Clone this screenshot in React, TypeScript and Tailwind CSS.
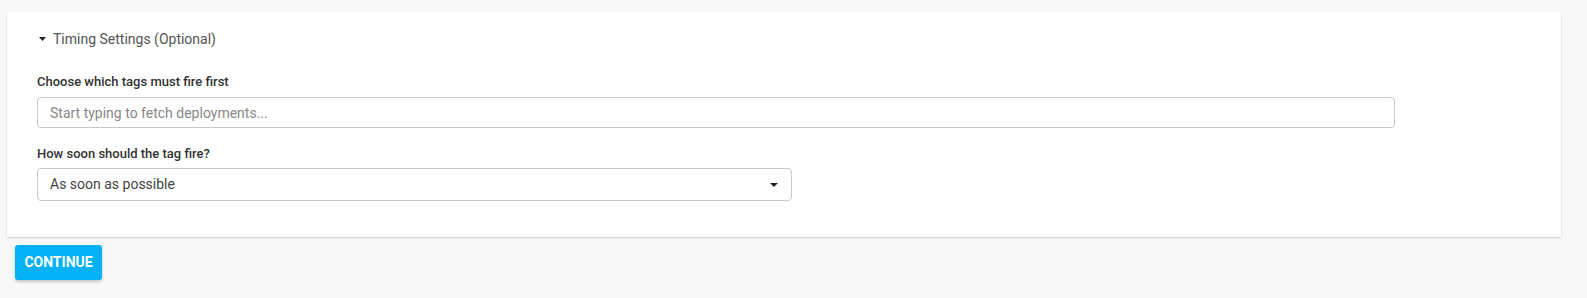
import { useState } from 'react';

export default function App() {
  const [open, setOpen] = useState(true);

  return (
    <div className="min-h-[298px] bg-[#f8f8f8] pt-3 pl-[7px] pr-[26px] font-['Roboto',sans-serif]">
      {/* Timing card */}
      <div className="bg-white shadow-[0_1px_2px_rgba(0,0,0,0.18)] pl-[30px] pt-[18px] pb-[36px]">
        <button
          onClick={() => setOpen(!open)}
          className="flex items-center gap-[7px] text-[14px] text-[#555] leading-[18px]"
        >
          <svg width="7" height="4" viewBox="0 0 7 4" className="ml-[2px]">
            <path d="M0 0h7L3.5 4z" fill="#222" />
          </svg>
          Timing Settings (Optional)
        </button>

        {open && (
          <div className="mt-[26px]">
            <label className="block text-[13px] font-medium text-[#333] leading-[16px]">
              Choose which tags must fire first
            </label>
            <input
              autoFocus
              placeholder="Start typing to fetch deployments..."
              className="mt-[7px] w-[1358px] h-[31px] rounded-[4px] border border-[#c8c8c8] px-[12px] text-[14px] text-[#444] placeholder:text-[#888] outline-none caret-black"
            />

            <label className="block mt-[18px] text-[13px] font-medium text-[#333] leading-[16px]">
              How soon should the tag fire?
            </label>
            <div className="relative mt-[6px] w-[755px]">
              <select className="w-full h-[33px] appearance-none rounded-[4px] border border-[#c8c8c8] bg-white px-[12px] text-[14px] text-[#444] outline-none">
                <option>As soon as possible</option>
                <option>After a delay</option>
              </select>
              <svg width="8" height="4" viewBox="0 0 8 4" className="pointer-events-none absolute right-[14px] top-[15px]">
                <path d="M0 0h8L4 4z" fill="#222" />
              </svg>
            </div>
          </div>
        )}
      </div>

      {/* Action */}
      <button className="mt-[8px] ml-[8px] h-[35px] w-[87px] rounded-[3px] bg-[#03b1f5] text-[14px] font-bold text-white shadow-[0_2px_3px_rgba(0,0,0,0.2)]">
        CONTINUE
      </button>
    </div>
  );
}
